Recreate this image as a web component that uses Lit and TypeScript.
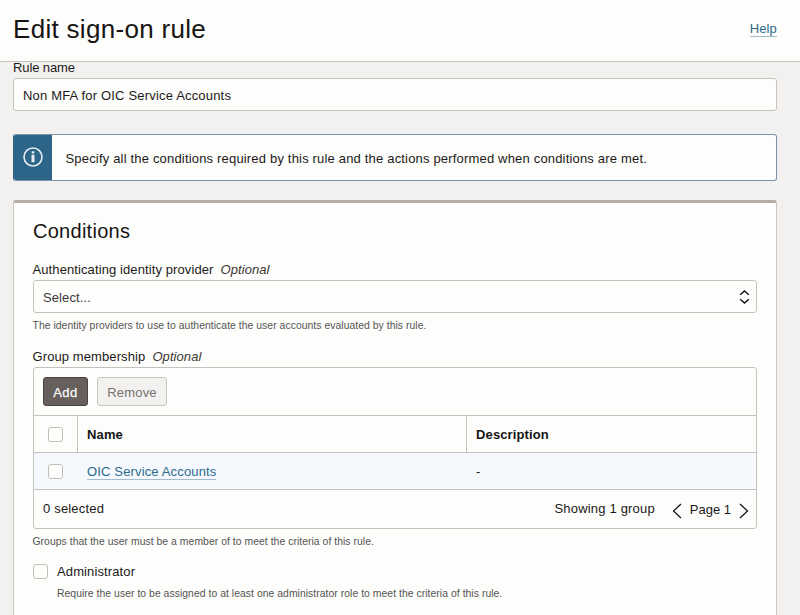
import { LitElement, html, css, svg } from "lit";
import { customElement, property } from "lit/decorators.js";

@customElement("check-box")
class CheckBox extends LitElement {
  static styles = css`
    :host { display: block; flex: none; }
    .box { box-sizing: border-box; width: 15px; height: 15px; border: 1px solid #c0bdba; border-radius: 3px; background: #fdfdfc; }
  `;
  render() {
    return html`<div class="box"></div>`;
  }
}

@customElement("field-label")
class FieldLabel extends LitElement {
  @property() label = "";
  static styles = css`
    :host { display: flex; gap: 7px; height: 18px; margin-left: -0.5px; line-height: 18px; font-size: 13px; letter-spacing: 0.1px; color: #1c1a19; white-space: nowrap; }
    .optional { font-style: italic; letter-spacing: 0.08px; color: #3a3836; }
  `;
  render() {
    return html`<span>${this.label}</span><span class="optional">Optional</span>`;
  }
}

@customElement("app-root")
class AppRoot extends LitElement {
  static styles = css`
    :host {
      display: flex; flex-direction: column; box-sizing: border-box;
      width: 800px; height: 615px; overflow: hidden;
      background: #f3f1f0; color: #1c1a19; white-space: nowrap;
      font: 13px/18px "Liberation Sans", Arial, sans-serif; letter-spacing: 0.18px;
    }
    * { box-sizing: border-box; }
    .header { display: flex; flex: none; height: 62px; justify-content: space-between; align-items: center; padding: 0 23px 4px 13px; background: #fdfdfc; border-bottom: 1px solid #c4c1bf; }
    h1 { margin: 0; font-size: 26px; line-height: 32px; font-weight: 400; letter-spacing: 0.3px; color: #161513; }
    .link { color: #2c6a8c; border-bottom: 1px solid #a3bccb; line-height: 14px; letter-spacing: 0.15px; }
    .help { margin-top: 2px; }
    .body { padding: 0 23px 0 13px; }
    .rule-label { height: 16px; line-height: 12px; letter-spacing: -0.1px; }
    .input { height: 33px; border: 1px solid #c7c3c1; border-radius: 3px; background: #fdfdfc; padding: 0 9px; line-height: 33px; }
    .banner { display: flex; height: 47px; margin-top: 23px; border: 1px solid #7892ad; border-left-color: #2c6587; border-radius: 3px; background: #fdfdfc; overflow: hidden; }
    .banner-icon { display: flex; width: 38px; align-items: center; justify-content: center; padding-bottom: 1px; background: #2c6587; }
    .banner-text { padding-left: 13.5px; line-height: 47px; }
    .panel { height: 440px; margin-top: 19px; padding: 17px 19px 0; border: 1px solid #c9c6c3; border-top: 3px solid #b4ada7; border-radius: 3px; background: #fdfdfc; }
    h2 { margin: 0 0 19px; font-size: 20px; line-height: 22px; font-weight: 400; letter-spacing: 0.27px; color: #161513; }
    .select { display: flex; height: 33px; justify-content: space-between; align-items: center; margin-top: 1px; padding: 0 6px 0 9px; border: 1px solid #c4c1bf; border-radius: 3px; color: #3c3a38; }
    .placeholder { padding-top: 2px; letter-spacing: 0.1px; }
    .hint { height: 14px; line-height: 14px; font-size: 10.4px; letter-spacing: 0.04px; color: #565452; }
    .select-hint { margin: 6px 0 15px -0.5px; }
    .table { height: 162px; margin-top: 1px; border: 1px solid #c4c1bf; border-radius: 3px; overflow: hidden; }
    .toolbar { display: flex; gap: 9px; height: 47px; padding: 9px 9px 0; }
    .button { width: 70px; height: 29px; border: 1px solid #c9c5c3; border-radius: 3px; background: #f3f1f0; color: #75716e; text-align: center; line-height: 29px; }
    .primary { width: 45px; background: #665f5b; border-color: #4b4541; color: #fdfdfc; letter-spacing: 0.5px; -webkit-text-stroke: 0.25px #fdfdfc; }
    .row { display: grid; grid-template-columns: 43px 389px 1fr; height: 37px; border-top: 1px solid #c4c1bf; }
    .cell { display: flex; align-items: center; padding: 0 9px; }
    .cell.check { padding: 1px 0 0 14px; }
    .head { font-weight: 700; letter-spacing: 0.13px; color: #161513; }
    .head .cell.check { padding-top: 0; }
    .head .cell + .cell { padding-top: 1px; border-left: 1px solid #c4c1bf; }
    .data { background: #f5f9fd; }
    .data .cell + .cell { padding-left: 10px; padding-top: 2px; }
    .footer { display: flex; height: 39px; padding: 10px 7px 0 9px; border-top: 1px solid #c4c1bf; }
    .count { margin-left: auto; }
    .pager { display: flex; align-items: center; gap: 8px; height: 22px; margin-left: 17px; }
    .page { margin-top: -2px; letter-spacing: 0; }
    .group-hint { margin: 6px 0 0 -0.5px; }
    .admin { display: flex; align-items: center; gap: 9px; margin-top: 15px; height: 15px; }
    .admin-label { margin-top: 1px; letter-spacing: 0.12px; }
    .admin-hint { margin: 8px 0 0 24px; }
    svg { display: block; flex: none; fill: none; }
  `;

  private chevron(d: string) {
    return html`<svg width="10" height="16" viewBox="0 0 10 16">${svg`<path d=${d} stroke="#1c1a19" stroke-width="1.3"/>`}</svg>`;
  }

  render() {
    return html`
      <div class="header"><h1>Edit sign-on rule</h1><span class="link help">Help</span></div>
      <div class="body">
        <div class="rule-label">Rule name</div>
        <div class="input">Non MFA for OIC Service Accounts</div>
        <div class="banner">
          <div class="banner-icon">
            <svg width="20" height="20" viewBox="0 0 20 20">
              <circle cx="10" cy="10" r="9" stroke="#e6eef3" stroke-width="1.6"/>
              <path d="M8.7 4.2h2.6v2.3H8.7zM8.5 7.7h3v7.6h-3z" fill="#e6eef3"/>
            </svg>
          </div>
          <div class="banner-text">Specify all the conditions required by this rule and the actions performed when conditions are met.</div>
        </div>
        <div class="panel">
          <h2>Conditions</h2>
          <field-label label="Authenticating identity provider"></field-label>
          <div class="select">
            <span class="placeholder">Select...</span>
            <svg width="11" height="14" viewBox="0 0 11 14"><path d="M1.2 4.7L5.5 1l4.3 3.7M1.2 9.3L5.5 13l4.3-3.7" stroke="#161513" stroke-width="1.5"/></svg>
          </div>
          <div class="hint select-hint">The identity providers to use to authenticate the user accounts evaluated by this rule.</div>
          <field-label label="Group membership"></field-label>
          <div class="table">
            <div class="toolbar"><div class="button primary">Add</div><div class="button">Remove</div></div>
            <div class="row head">
              <div class="cell check"><check-box></check-box></div>
              <div class="cell">Name</div>
              <div class="cell">Description</div>
            </div>
            <div class="row data">
              <div class="cell check"><check-box></check-box></div>
              <div class="cell"><span class="link">OIC Service Accounts</span></div>
              <div class="cell">-</div>
            </div>
            <div class="footer">
              <span>0 selected</span>
              <span class="count">Showing 1 group</span>
              <div class="pager">${this.chevron("M9 1L1.5 8L9 15")}<span class="page">Page 1</span>${this.chevron("M1 1L8.5 8L1 15")}</div>
            </div>
          </div>
          <div class="hint group-hint">Groups that the user must be a member of to meet the criteria of this rule.</div>
          <div class="admin"><check-box></check-box><span class="admin-label">Administrator</span></div>
          <div class="hint admin-hint">Require the user to be assigned to at least one administrator role to meet the criteria of this rule.</div>
        </div>
      </div>
    `;
  }
}
